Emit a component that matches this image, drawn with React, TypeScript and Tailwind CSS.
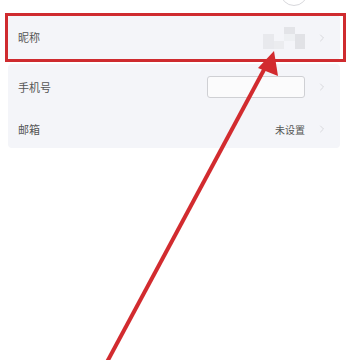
import { ChevronRight } from "lucide-react";

function Row({ label, children }: { label: string; children?: React.ReactNode }) {
  return (
    <div className="flex items-center h-full pl-[10px] pr-[12px]">
      <span className="text-[11px] text-[#555]">{label}</span>
      <div className="ml-auto flex items-center gap-[11px]">
        {children}
        <ChevronRight size={12} strokeWidth={1.5} className="text-[#cdcdd1]" />
      </div>
    </div>
  );
}

export default function App() {
  return (
    <main
      className="relative w-[352px] h-[360px] overflow-hidden bg-white"
      style={{ fontFamily: '"Noto Sans CJK SC", "Noto Sans", sans-serif' }}
    >
      {/* avatar edge peeking at top */}
      <div className="absolute left-[280px] top-[-22px] w-[28px] h-[28px] rounded-full border border-[#d8d8dc] bg-white" />

      <section className="pl-2 pr-3 pt-[15px]">
        <div className="h-[45px] bg-[#f4f5f9] rounded-sm">
          <Row label="昵称">
            <div className="grid grid-cols-4 grid-rows-3 w-[42px] h-[22px] opacity-70">
              <div className="col-start-1 row-start-2 row-span-2 bg-[#e3e4e8]" />
              <div className="col-start-2 row-start-3 bg-[#e8e9ec]" />
              <div className="col-start-3 row-start-1 bg-[#dcdde1]" />
              <div className="col-start-3 row-start-2 bg-[#eceef1]" />
              <div className="col-start-4 row-start-2 row-span-2 bg-[#d9dade]" />
            </div>
          </Row>
        </div>

        <div className="mt-[4px] h-[84px] bg-[#f4f5f9] rounded-sm flex flex-col">
          <div className="h-[46px]">
            <Row label="手机号">
              <div className="w-[98px] h-[22px] border border-[#cfd0d4] rounded-[3px] bg-[#fbfbfc]" />
            </Row>
          </div>
          <div className="flex-1">
            <Row label="邮箱">
              <span className="text-[10px] text-[#555]">未设置</span>
            </Row>
          </div>
        </div>
      </section>

      {/* red highlight frame */}
      <div className="absolute left-[5px] top-[13px] w-[341px] h-[49px] border-[3px] border-[#cf2b2f]" />

      {/* red arrow */}
      <svg className="absolute inset-0" width="352" height="360" viewBox="0 0 352 360">
        <line x1="107" y1="362" x2="266" y2="66" stroke="#d22b2f" strokeWidth="4" />
        <polygon points="274,51 278,76 258,68" fill="#d22b2f" />
      </svg>
    </main>
  );
}
